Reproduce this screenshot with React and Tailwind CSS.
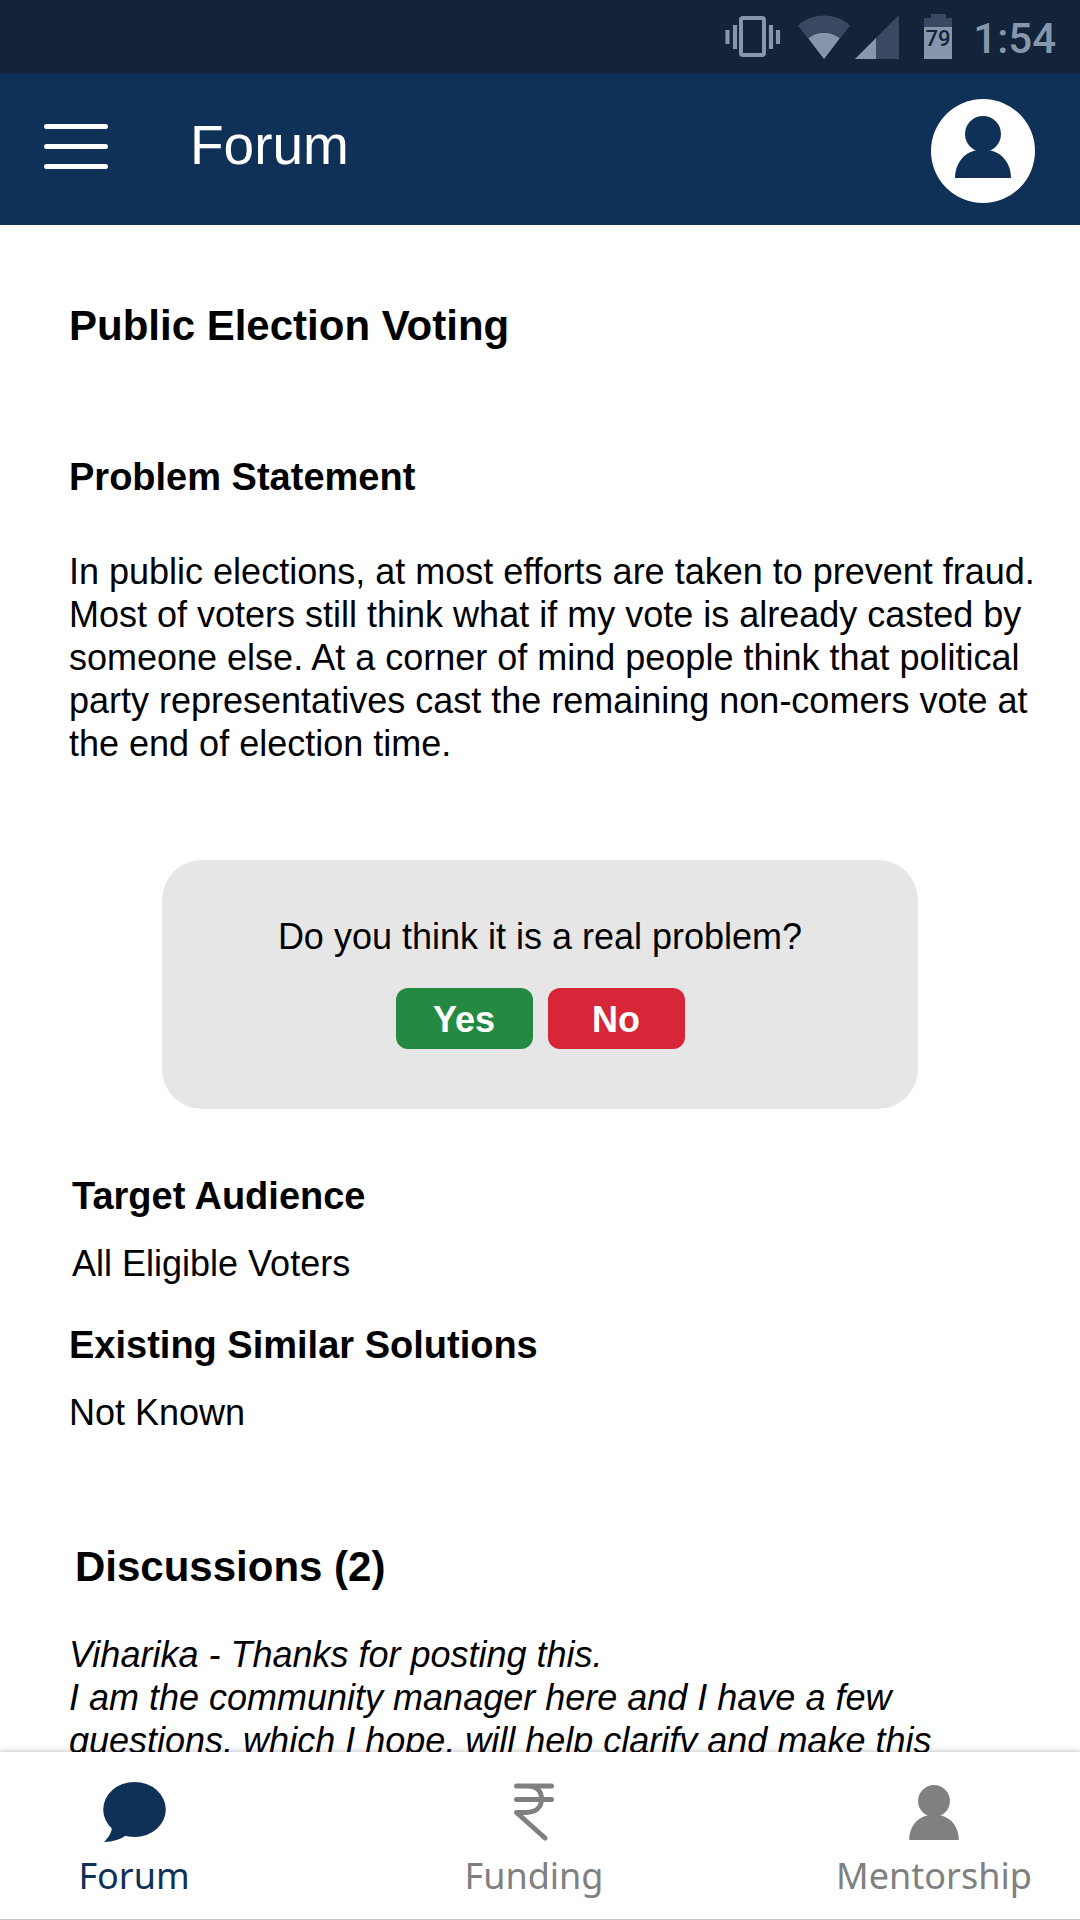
function VibrateIcon() {
  return (
    <svg viewBox="0 0 56 44" className="h-11 w-14" aria-hidden="true">
      <rect x="16" y="3" width="23" height="37" rx="2" fill="none" stroke="#8797ab" strokeWidth="4" />
      <path d="M2.500 15v14M10 10v24M46 10v24M53 15v14" stroke="#8797ab" strokeWidth="4.200" />
    </svg>
  );
}

function WifiIcon() {
  return (
    <svg viewBox="0 0 54 44" className="h-11 w-[54px]" aria-hidden="true">
      <path d="M27 44 1 10.500C8 4 17 0.500 27 0.500S46 4 53 10.500Z" fill="#384961" />
      <path d="M27 44 11.500 23.500C15 20 21 18 27 18s12 2 15.500 5.500Z" fill="#8797ab" />
    </svg>
  );
}

function SignalIcon() {
  return (
    <svg viewBox="0 0 44 44" className="size-11" aria-hidden="true">
      <path d="M0 44 44 0v44Z" fill="#384961" />
      <path d="M0 44 21 23v21Z" fill="#8797ab" />
    </svg>
  );
}

function BatteryIcon() {
  return (
    <svg viewBox="0 0 30 45" className="h-[45px] w-[30px]" aria-hidden="true">
      <path d="M1 13V4h7V0h15v4h6v9Z" fill="#384961" />
      <path d="M1 13h28v32H1Z" fill="#8797ab" />
      <text x="15" y="32" textAnchor="middle" className="font-['Roboto',sans-serif] text-[22px] font-medium" fill="#132339">
        79
      </text>
    </svg>
  );
}

function PersonIcon({ className }) {
  return (
    <svg viewBox="0 0 56 62" className={className} fill="currentColor" aria-hidden="true">
      <circle cx="28" cy="18" r="18" />
      <path d="M0 62C0 48 8 37.500 20 34.500H36C48 37.500 56 48 56 62Z" />
    </svg>
  );
}

function ChatIcon() {
  return (
    <svg viewBox="0 0 64 60" className="h-[60px] w-16" fill="currentColor" aria-hidden="true">
      <ellipse cx="32.500" cy="27.500" rx="31.300" ry="27.500" />
      <path d="M10 44C10 51 6 56 2 60c9-.3 17-2.500 23-7.500Z" />
    </svg>
  );
}

function RupeeIcon() {
  return (
    <svg viewBox="0 0 40 58" className="h-[58px] w-10" fill="none" stroke="currentColor" strokeWidth="5" strokeLinecap="round" strokeLinejoin="round" aria-hidden="true">
      <path d="M2.500 3H37.500M2.500 16.500H37.500M14 3c9 0 13.500 5.500 13.500 13C27.500 24 22 29.500 12 29.500H2.500L31 55" />
    </svg>
  );
}

function StatusBar() {
  return (
    <div className="flex h-[73px] shrink-0 items-center justify-end bg-[#132339] pr-6">
      <VibrateIcon />
      <div className="ml-4 flex items-center">
        <WifiIcon />
        <div className="ml-1">
          <SignalIcon />
        </div>
      </div>
      <div className="ml-6">
        <BatteryIcon />
      </div>
      <span className="ml-5 pt-1 font-['Roboto',sans-serif] text-[42px] leading-none font-medium text-[#8797ab]">1:54</span>
    </div>
  );
}

function Header() {
  return (
    <header className="flex h-[152px] shrink-0 items-center bg-[#103157] pr-[45px] pl-11 text-white">
      <button type="button" aria-label="Open menu" className="flex flex-col gap-[15px] pb-1.5">
        <span className="h-[5px] w-16 rounded-full bg-white" />
        <span className="h-[5px] w-16 rounded-full bg-white" />
        <span className="h-[5px] w-16 rounded-full bg-white" />
      </button>
      <h1 className="ml-[82px] pb-2 text-[55px] leading-16">Forum</h1>
      <button
        type="button"
        aria-label="Profile"
        className="mt-1 ml-auto flex size-[104px] flex-col items-center rounded-full bg-white pt-[17px] text-[#103157]"
      >
        <PersonIcon className="h-[62px] w-14" />
      </button>
    </header>
  );
}

function Heading({ children }) {
  return <h3 className="text-[38px] leading-11 font-bold">{children}</h3>;
}

function Poll() {
  return (
    <section className="mx-auto mt-[95px] flex w-[756px] max-w-full flex-col items-center rounded-[40px] bg-[#e6e6e6] pt-[55px] pb-[60px]">
      <p>Do you think it is a real problem?</p>
      <div className="mt-[30px] flex gap-[15px] font-bold text-white">
        <button type="button" className="h-[61px] w-[137px] rounded-xl bg-[#258a41] pt-0.5">
          Yes
        </button>
        <button type="button" className="h-[61px] w-[137px] rounded-xl bg-[#d62637] pt-0.5">
          No
        </button>
      </div>
    </section>
  );
}

const tabs = [
  { label: "Forum", icon: <ChatIcon />, active: true },
  { label: "Funding", icon: <RupeeIcon /> },
  { label: "Mentorship", icon: <PersonIcon className="h-[55px] w-[50px]" /> },
];

function TabBar() {
  return (
    <nav className="relative flex h-[168px] shrink-0 justify-between border-b border-[#c8c8c8] bg-white pt-[30px] pr-[42px] pl-[30px] font-['Noto_Sans',sans-serif] text-[36px] leading-12 shadow-[0_0_6px_rgba(0,0,0,0.3)]">
      {tabs.map((tab) => (
        <a
          key={tab.label}
          href={"#" + tab.label.toLowerCase()}
          aria-current={tab.active ? "page" : undefined}
          className={"flex w-52 flex-col items-center " + (tab.active ? "text-[#103157]" : "text-[#808080]")}
        >
          <span className="flex h-[60px] items-center">{tab.icon}</span>
          <span className="mt-2.5">{tab.label}</span>
        </a>
      ))}
    </nav>
  );
}

export default function App() {
  return (
    <div className="flex h-screen flex-col overflow-hidden bg-white font-['Liberation_Sans',Arial,sans-serif] text-black">
      <StatusBar />
      <Header />
      <main className="min-h-0 flex-1 overflow-hidden pt-[77px] text-[36px] leading-[43px]">
        <div className="pr-10 pl-[69px]">
          <h2 className="text-[42px] leading-12 font-bold">Public Election Voting</h2>
          <section className="mt-[105px]">
            <Heading>Problem Statement</Heading>
            <p className="mt-[51px]">
              In public elections, at most efforts are taken to prevent fraud. Most of voters still think what if my
              vote is already casted by someone else. At a corner of mind people think that political party
              representatives cast the remaining non-comers vote at the end of election time.
            </p>
          </section>
        </div>
        <Poll />
        <section className="mt-[65px] pl-[72px]">
          <Heading>Target Audience</Heading>
          <p className="mt-6">All Eligible Voters</p>
        </section>
        <section className="mt-[38px] pl-[69px]">
          <Heading>Existing Similar Solutions</Heading>
          <p className="mt-6">Not Known</p>
        </section>
        <section className="mt-[109px]">
          <h2 className="pl-[75px] text-[42px] leading-12 font-bold">Discussions (2)</h2>
          <p className="mt-[42px] pr-32 pl-[69px] italic">
            Viharika - Thanks for posting this.
            <br />I am the community manager here and I have a few questions, which I hope, will help clarify and make
            this
          </p>
        </section>
      </main>
      <TabBar />
    </div>
  );
}
